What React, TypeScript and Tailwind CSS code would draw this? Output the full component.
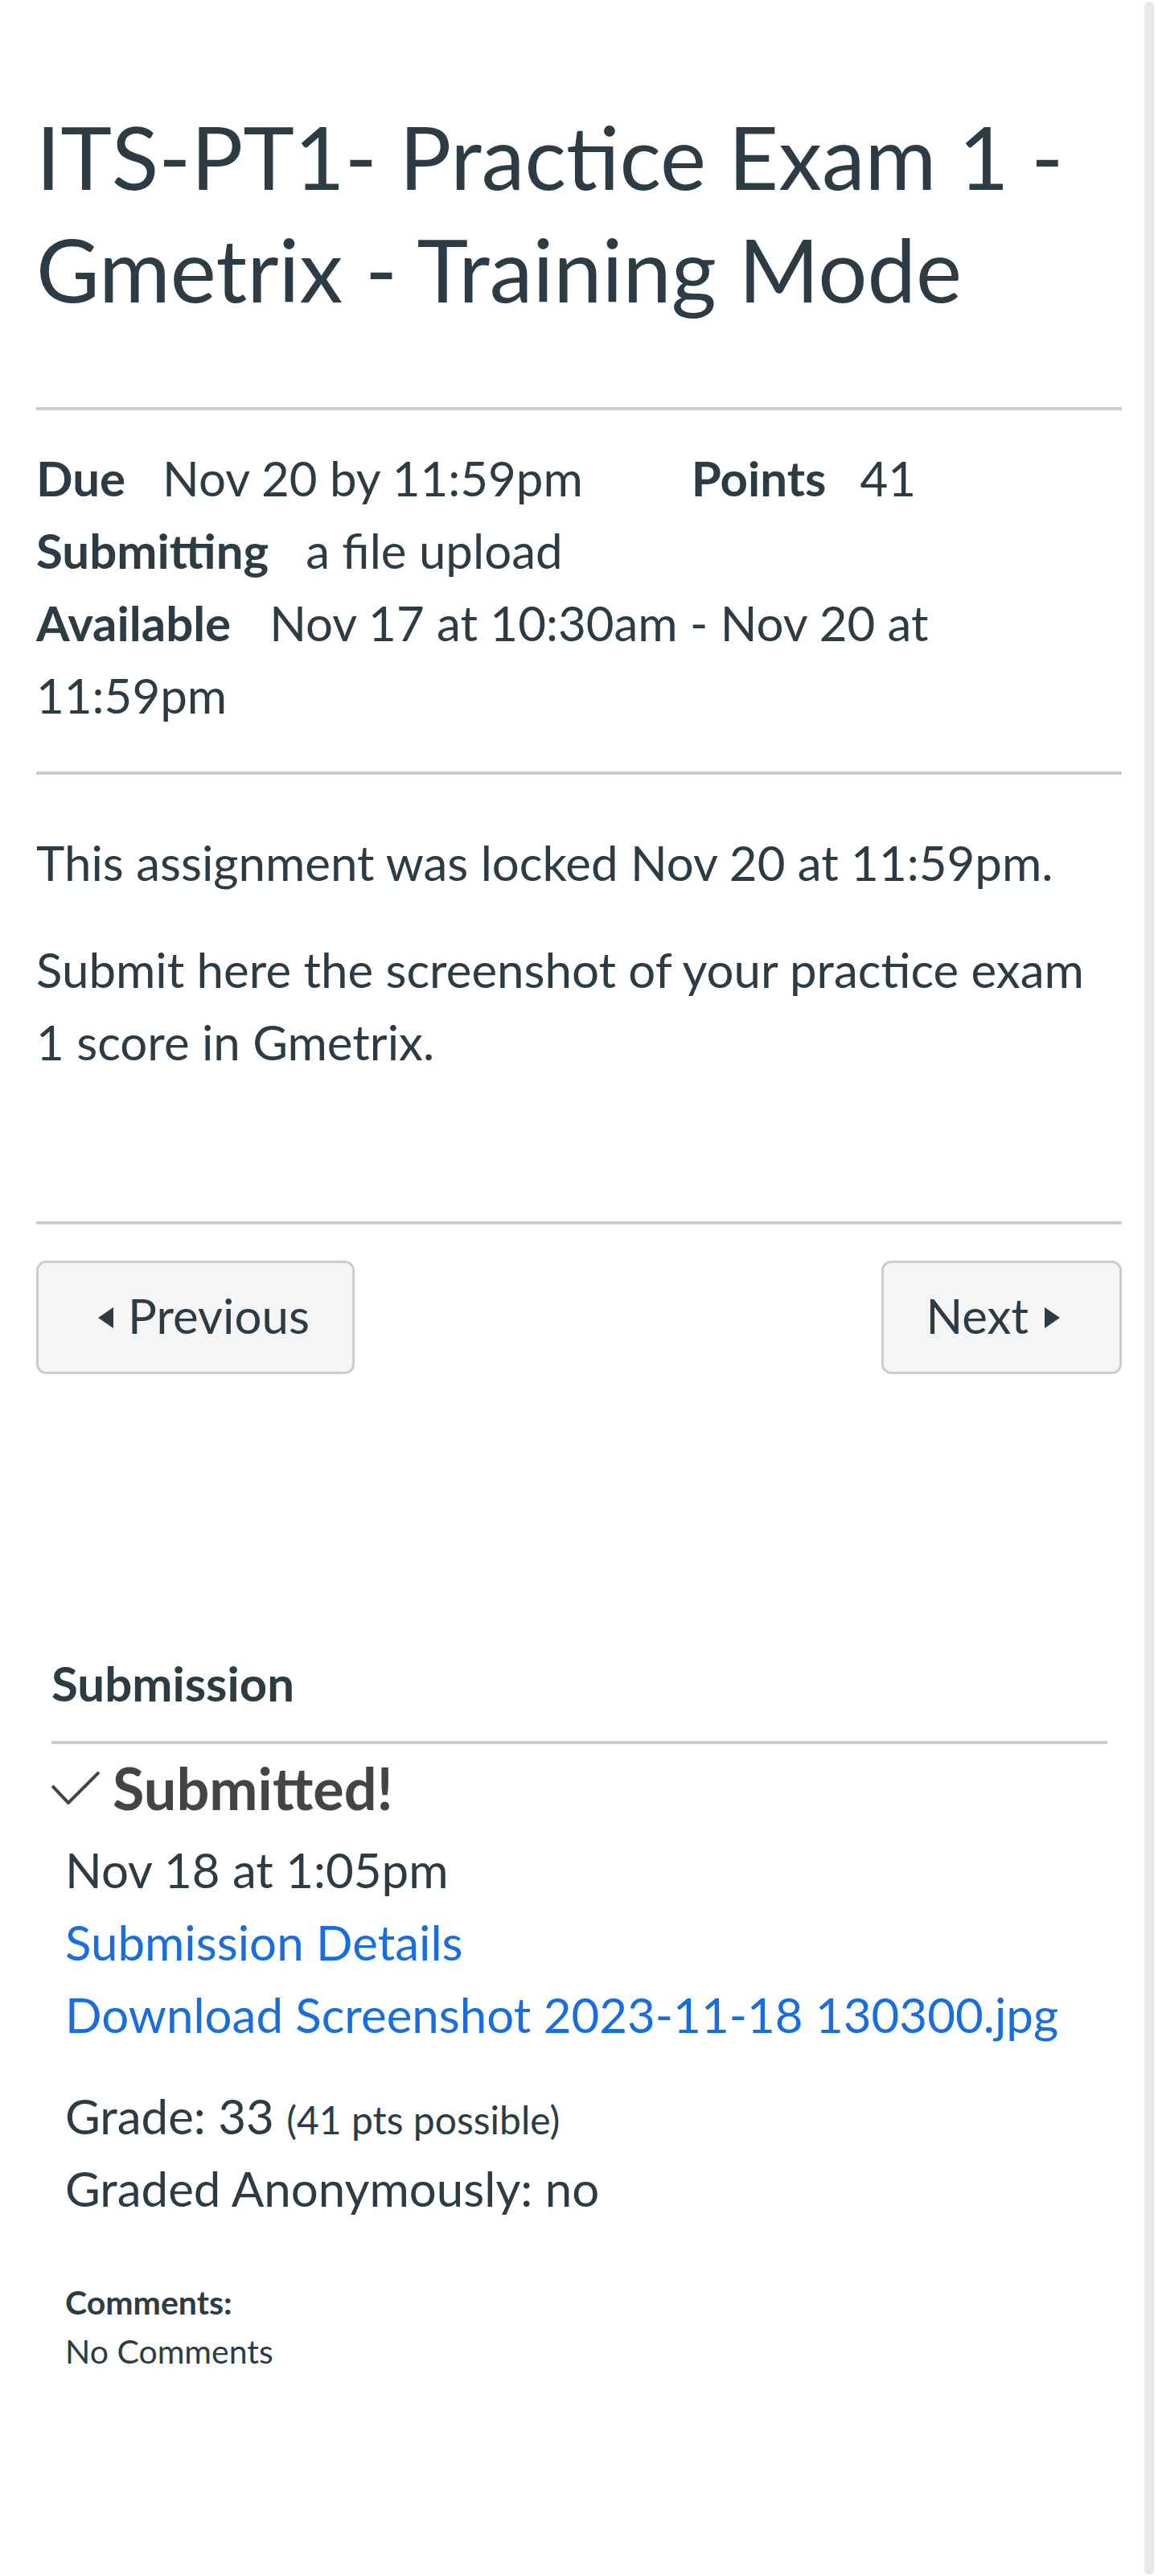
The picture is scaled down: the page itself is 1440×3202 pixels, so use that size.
import React from "react";

function Triangle({ dir }: { dir: "left" | "right" }) {
  return (
    <svg width="19" height="26" viewBox="0 0 19 26" className="shrink-0">
      {dir === "left" ? (
        <polygon points="19,0 19,26 0,13" fill="#2d3b45" />
      ) : (
        <polygon points="0,0 0,26 19,13" fill="#2d3b45" />
      )}
    </svg>
  );
}

export default function App() {
  return (
    <div className="relative min-h-[3202px] bg-white font-['Lato','Noto_Sans',sans-serif] text-[#2d3b45]">
      {/* right-hand scroll strip */}
      <div className="absolute top-[2px] bottom-[2px] right-[5px] w-[12px] rounded-full bg-[#e8e8e8]" />

      <div className="px-[45px] pt-[124px]">
        <h1 className="text-[108px] leading-[140px] font-normal">
          ITS-PT1- Practice Exam 1 - Gmetrix - Training Mode
        </h1>

        <div className="mt-[102px] h-[4px] bg-[#c7cdd1]" />

        <div className="mt-[39px] text-[60px] leading-[90px]">
          <div>
            <span className="mr-[135px]">
              <span className="font-bold mr-[46px]">Due</span>
              <span>Nov 20 by 11:59pm</span>
            </span>
            <span>
              <span className="font-bold mr-[42px]">Points</span>
              <span>41</span>
            </span>
          </div>
          <div>
            <span className="font-bold mr-[46px]">Submitting</span>
            <span>a file upload</span>
          </div>
          <div>
            <span className="font-bold mr-[48px]">Available</span>
            <span>Nov 17 at 10:30am - Nov 20 at 11:59pm</span>
          </div>
        </div>

        <div className="mt-[50px] h-[4px] bg-[#c7cdd1]" />

        <div className="text-[60px] leading-[90px]">
          <p className="mt-[64px]">This assignment was locked Nov 20 at 11:59pm.</p>
          <p className="mt-[43px]">
            Submit here the screenshot of your practice exam 1 score in Gmetrix.
          </p>
        </div>

        <div className="mt-[178px] h-[4px] bg-[#c7cdd1]" />

        <div className="mt-[45px] flex justify-between text-[60px] leading-[90px]">
          <button className="flex h-[141px] w-[396px] items-center gap-[18px] rounded-[12px] border-[3px] border-[#c7cdd1] bg-[#f5f5f5] pl-[74px]">
            <Triangle dir="left" />
            <span className="-mt-[6px]">Previous</span>
          </button>
          <button className="flex h-[141px] w-[299px] items-center justify-end gap-[20px] rounded-[12px] border-[3px] border-[#c7cdd1] bg-[#f5f5f5] pr-[74px]">
            <span className="-mt-[6px]">Next</span>
            <Triangle dir="right" />
          </button>
        </div>

        <section className="mt-[339px] ml-[19px] mr-[18px]">
          <h2 className="text-[60px] leading-[90px] font-bold">Submission</h2>
          <div className="mt-[27px] h-[4px] bg-[#c7cdd1]" />

          <div className="mt-[9px] flex items-center gap-[16px] text-[72px] leading-[90px] font-bold text-[#444444]">
            <svg width="60" height="41" viewBox="0 0 60 41" className="shrink-0">
              <polyline
                points="1,18 21,39 59,1"
                fill="none"
                stroke="#444444"
                strokeWidth="4"
              />
            </svg>
            <span>Submitted!</span>
          </div>

          <div className="pl-[17px] text-[60px] leading-[90px]">
            <div className="mt-[12px]">Nov 18 at 1:05pm</div>
            <div>
              <a href="#" className="text-[#1a6ddd]">
                Submission Details
              </a>
            </div>
            <div>
              <a href="#" className="text-[#1a6ddd]">
                Download Screenshot 2023-11-18 130300.jpg
              </a>
            </div>

            <div className="mt-[36px]">
              Grade: 33 <span className="text-[48px] leading-none">(41 pts possible)</span>
            </div>
            <div>Graded Anonymously: no</div>

            <div className="mt-[66px] text-[41px] leading-[61px]">
              <div className="font-bold">Comments:</div>
              <div>No Comments</div>
            </div>
          </div>
        </section>
      </div>
    </div>
  );
}
